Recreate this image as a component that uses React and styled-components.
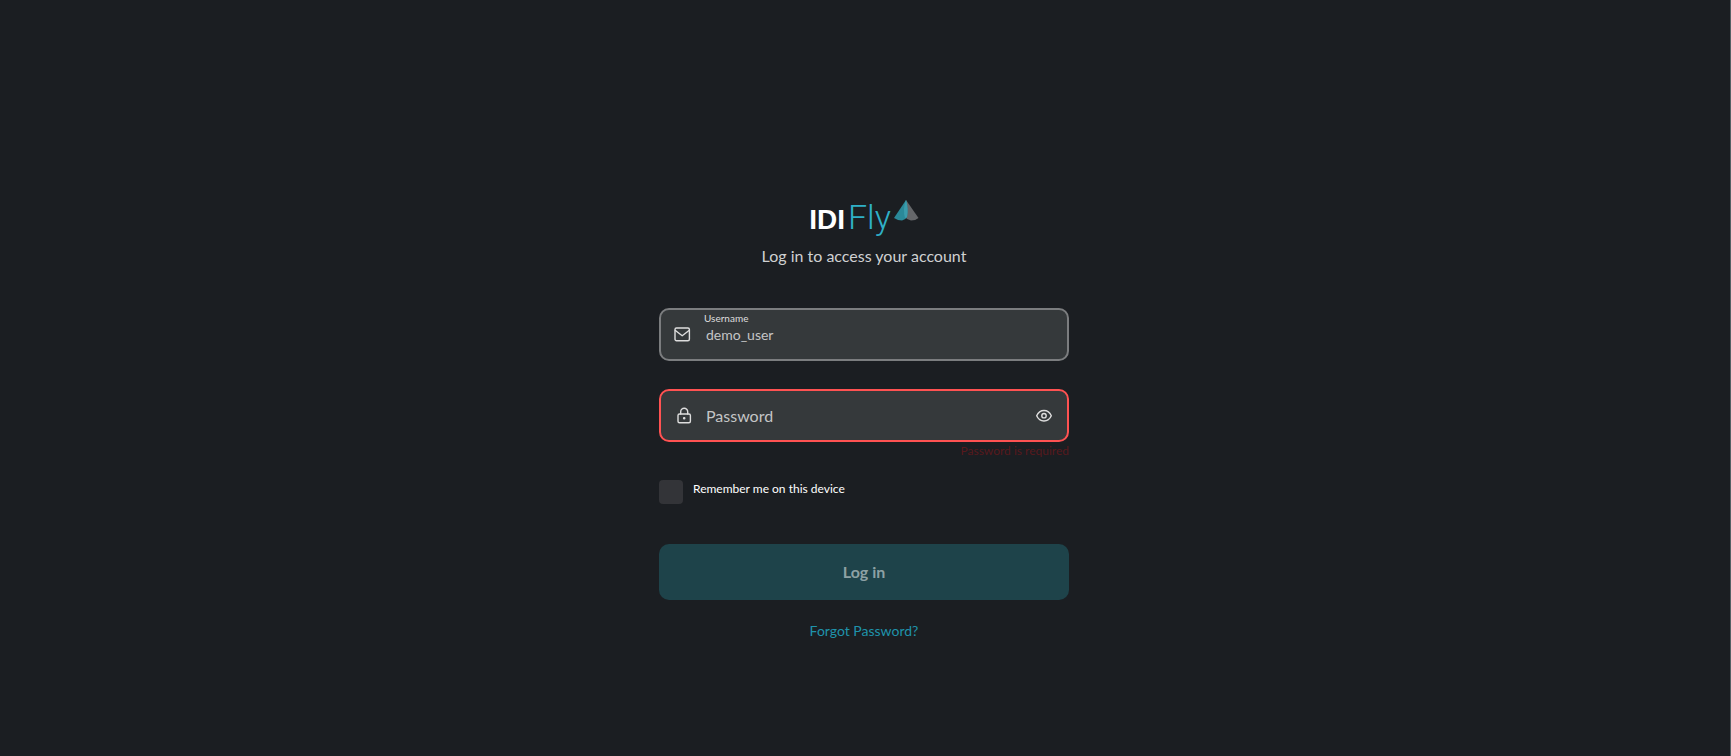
import React, {useState} from 'react';
import {createGlobalStyle, styled} from 'styled-components';

const GlobalStyle = createGlobalStyle`
  * {
    box-sizing: border-box;
  }

  body {
    margin: 0;
    background-color: #1b1e22;
    font-family: "Lato", sans-serif;
  }
`

const PageStyled = styled.main`
  min-height: 100vh;
  display: flex;
  justify-content: center;
  align-items: center;
  padding: 116px 18px 32px 16px;
  border-right: 1px solid #566165;
`

const FormStyled = styled.form`
  width: 100%;
  max-width: 410px;
  display: flex;
  flex-direction: column;
`

const HeaderStyled = styled.header`
  display: flex;
  flex-direction: column;
  align-items: center;
  margin-bottom: 40px;
`

const LogoStyled = styled.div`
  display: flex;
  align-items: baseline;
  gap: 3px;
  height: 44px;
  line-height: 34px;
`

const LogoNameStyled = styled.span`
  color: #fff;
  font-family: "Liberation Sans", sans-serif;
  font-size: 28px;
  font-weight: 700;
`

const LogoProductStyled = styled.span`
  color: #2fb0c7;
  font-family: "Roboto", sans-serif;
  font-size: 34px;
  font-weight: 300;
`

const LogoMarkStyled = styled.svg`
  align-self: flex-start;
`

const SubtitleStyled = styled.p`
  margin: 0;
  color: #d0d1d2;
  font-size: 16px;
  line-height: 24px;
`

const FieldsStyled = styled.div`
  display: grid;
  gap: 28px;
`

const FieldStyled = styled.div`
  display: flex;
  align-items: center;
  height: 53px;
  padding: 0 13px;
  border: 2px solid ${({$invalid}) => $invalid ? '#ff5252' : '#7b7d7f'};
  border-radius: 10px;
  background-color: #35393b;
  color: #dedede;
`

const FieldBodyStyled = styled.div`
  flex: 1;
  display: grid;
  align-self: stretch;
  margin-left: 10px;
`

const LabelStyled = styled.label`
  grid-area: 1 / 1;
  justify-self: start;
  padding: ${({$floating}) => $floating ? '1px 0 0' : '0 2px'};
  color: ${({$floating}) => $floating ? '#dedede' : '#c4c5c6'};
  font-size: ${({$floating}) => $floating ? '10px' : '16px'};
  line-height: ${({$floating}) => $floating ? '14px' : '49px'};
`

const InputStyled = styled.input`
  grid-area: 1 / 1;
  width: 100%;
  padding: 1px 2px 0;
  border: none;
  outline: none;
  background: none;
  color: #c4c5c6;
  font-family: inherit;
  font-size: 14px;
`

const IconButtonStyled = styled.button`
  display: flex;
  padding: 0;
  border: none;
  background: none;
  color: inherit;
  cursor: pointer;
`

const ErrorStyled = styled.p`
  min-height: 28px;
  margin: 0;
  color: #58191d;
  font-size: 12px;
  line-height: 18px;
  text-align: right;
`

const RememberStyled = styled.div`
  display: flex;
  align-items: flex-start;
  gap: 10px;
  margin: 10px 0 40px;
  color: #fff;
  font-size: 12px;
  line-height: 18px;
`

const CheckboxStyled = styled.input`
  appearance: none;
  width: 24px;
  height: 24px;
  margin: 0;
  border-radius: 4px;
  background-color: #333438;

  &:checked {
    background-color: #2fb0c7;
  }
`

const SubmitButtonStyled = styled.button`
  height: 56px;
  border: none;
  border-radius: 10px;
  background-color: #1e434a;
  color: #8da1a4;
  font-family: inherit;
  font-size: 16px;
  font-weight: 700;
`

const ForgotLinkStyled = styled.a`
  align-self: center;
  margin-top: 21px;
  color: #1f93ab;
  font-size: 14px;
  line-height: 20px;
  text-decoration: none;
`

function Icon({children}) {
    return (
        <svg width='20' height='20' viewBox='0 0 20 20' fill='none' stroke='currentColor'
             strokeWidth='1.4' strokeLinecap='round' strokeLinejoin='round' aria-hidden='true'>
            {children}
        </svg>
    )
}

function Logo() {
    return (
        <LogoStyled>
            <LogoNameStyled>IDI</LogoNameStyled>
            <LogoProductStyled>Fly</LogoProductStyled>
            <LogoMarkStyled width='25' height='22' viewBox='0 0 25 22' aria-hidden='true'>
                <path d='M12 0L24.5 18Q21.5 20.5 17 20.5Q13 20 11 17Z' fill='#65676a'/>
                <path d='M12 0L0 18Q4 20.5 8 20.5Q11.5 20 13 17Q14.5 8 12 0Z' fill='#2a8999'/>
                <path d='M12 0Q8.5 9 11 18Q12.2 18 13 17Q14.5 8 12 0Z' fill='#3a9cad'/>
            </LogoMarkStyled>
        </LogoStyled>
    )
}

function Field({icon, label, name, type, value, onChange, invalid, children}) {
    return (
        <FieldStyled $invalid={invalid}>
            <Icon>{icon}</Icon>
            <FieldBodyStyled>
                <LabelStyled htmlFor={name} $floating={value !== ''}>{label}</LabelStyled>
                <InputStyled id={name}
                             name={name}
                             type={type}
                             value={value}
                             onChange={onChange}/>
            </FieldBodyStyled>
            {children}
        </FieldStyled>
    )
}

const mailIcon = (
    <>
        <rect x='1' y='4' width='14.4' height='12.8' rx='1.5'/>
        <path d='M1.4 6.5L8.2 11.7L15 6.5'/>
    </>
)

const lockIcon = (
    <>
        <rect x='4' y='9' width='12.4' height='8.8' rx='1.5'/>
        <path d='M6.7 9V6.8a3.5 3.5 0 0 1 7 0V9'/>
        <circle cx='10.2' cy='13.2' r='0.6' fill='currentColor'/>
    </>
)

export default function App() {
    const [loginForm, setLoginForm] = useState({
        username: 'demo_user',
        password: ''
    })
    const [isPasswordVisible, setIsPasswordVisible] = useState(false)

    function handleOnLoginFormChange(event) {
        setLoginForm({
            ...loginForm,
            [event.target.name]: event.target.value
        })
    }

    const isPasswordMissing = !loginForm.password

    return (
        <PageStyled>
            <GlobalStyle/>
            <FormStyled onSubmit={event => event.preventDefault()}>
                <HeaderStyled>
                    <Logo/>
                    <SubtitleStyled>Log in to access your account</SubtitleStyled>
                </HeaderStyled>
                <FieldsStyled>
                    <Field icon={mailIcon}
                           label='Username'
                           name='username'
                           type='text'
                           value={loginForm.username}
                           onChange={handleOnLoginFormChange}/>
                    <Field icon={lockIcon}
                           label='Password'
                           name='password'
                           type={isPasswordVisible ? 'text' : 'password'}
                           value={loginForm.password}
                           onChange={handleOnLoginFormChange}
                           invalid={isPasswordMissing}>
                        <IconButtonStyled type='button'
                                          aria-label='Show password'
                                          onClick={() => setIsPasswordVisible(!isPasswordVisible)}>
                            <Icon>
                                <path d='M2.7 10.7C5.7 3.7 14.3 3.7 17.3 10.7C14.3 17.7 5.7 17.7 2.7 10.7Z'/>
                                <circle cx='10' cy='10.7' r='2.2'/>
                            </Icon>
                        </IconButtonStyled>
                    </Field>
                </FieldsStyled>
                <ErrorStyled>{isPasswordMissing && 'Password is required'}</ErrorStyled>
                <RememberStyled>
                    <CheckboxStyled id='remember' type='checkbox'/>
                    <label htmlFor='remember'>Remember me on this device</label>
                </RememberStyled>
                <SubmitButtonStyled disabled={isPasswordMissing}>Log in</SubmitButtonStyled>
                <ForgotLinkStyled href='#forgot'>Forgot Password?</ForgotLinkStyled>
            </FormStyled>
        </PageStyled>
    )
}
